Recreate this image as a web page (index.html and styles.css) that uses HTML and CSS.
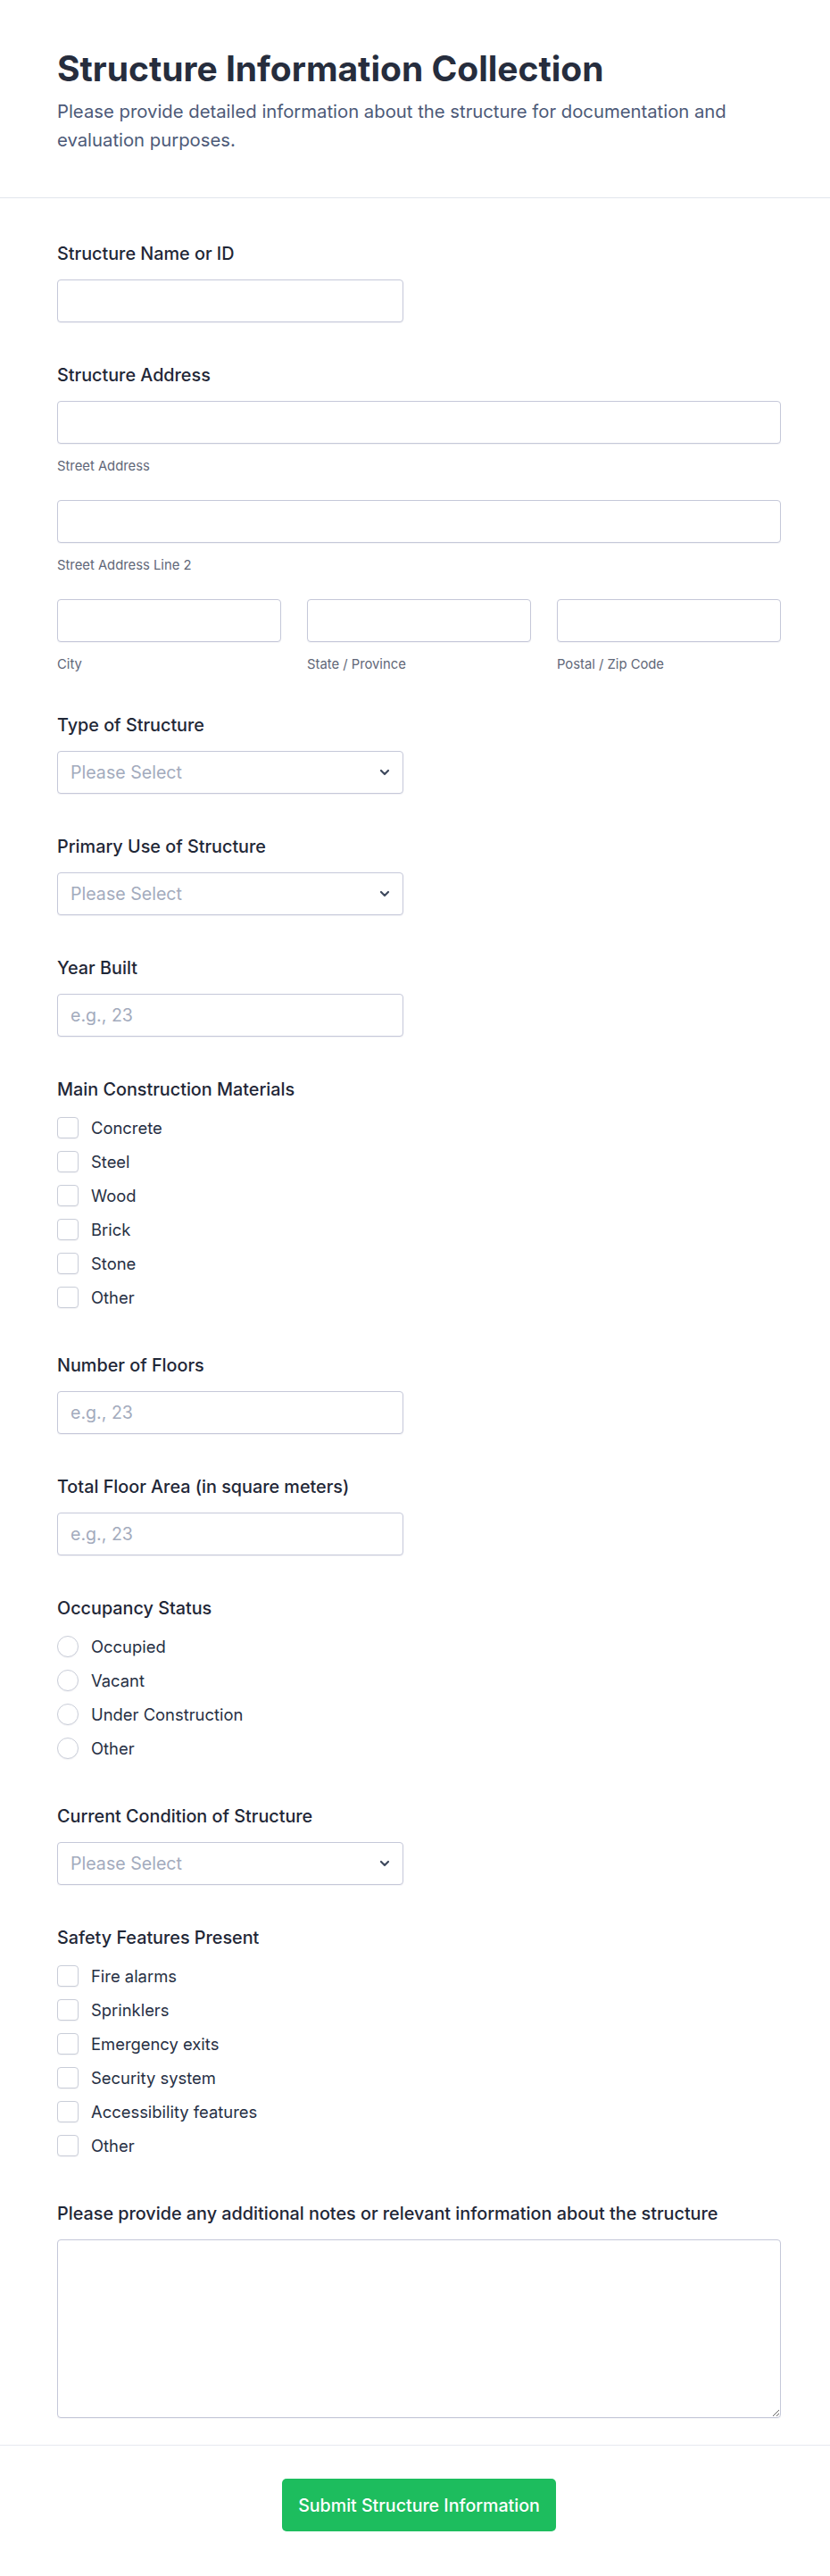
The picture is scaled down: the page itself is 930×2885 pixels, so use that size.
FILE: index.html
```html
<!DOCTYPE html>
<html lang="en">
<head>
<meta charset="utf-8">
<title>Structure Information Collection</title>
<link rel="stylesheet" href="styles.css">
</head>
<body>
<div class="page">
  <header class="header">
    <h1 class="title">Structure Information Collection</h1>
    <p class="subtitle">Please provide detailed information about the structure for documentation and evaluation purposes.</p>
  </header>

  <form class="form">
    <div class="field">
      <label class="label">Structure Name or ID</label>
      <input class="input input-half" type="text">
    </div>

    <div class="field field-address">
      <label class="label">Structure Address</label>
      <div class="addr-line">
        <input class="input" type="text">
        <span class="sublabel">Street Address</span>
      </div>
      <div class="addr-line">
        <input class="input" type="text">
        <span class="sublabel">Street Address Line 2</span>
      </div>
      <div class="addr-row">
        <div class="addr-cell">
          <input class="input" type="text">
          <span class="sublabel">City</span>
        </div>
        <div class="addr-cell">
          <input class="input" type="text">
          <span class="sublabel">State / Province</span>
        </div>
        <div class="addr-cell">
          <input class="input" type="text">
          <span class="sublabel">Postal / Zip Code</span>
        </div>
      </div>
    </div>

    <div class="field">
      <label class="label">Type of Structure</label>
      <div class="select input-half"><span class="placeholder">Please Select</span><svg class="chevron" viewBox="0 0 12 8" width="12" height="8"><path d="M2 2 L6 6 L10 2" fill="none" stroke="#3f4a5e" stroke-width="2.2" stroke-linecap="round" stroke-linejoin="round"/></svg></div>
    </div>

    <div class="field">
      <label class="label">Primary Use of Structure</label>
      <div class="select input-half"><span class="placeholder">Please Select</span><svg class="chevron" viewBox="0 0 12 8" width="12" height="8"><path d="M2 2 L6 6 L10 2" fill="none" stroke="#3f4a5e" stroke-width="2.2" stroke-linecap="round" stroke-linejoin="round"/></svg></div>
    </div>

    <div class="field">
      <label class="label">Year Built</label>
      <input class="input input-half" type="text" placeholder="e.g., 23">
    </div>

    <div class="field field-group">
      <label class="label">Main Construction Materials</label>
      <div class="options">
        <label class="option"><span class="box"></span>Concrete</label>
        <label class="option"><span class="box"></span>Steel</label>
        <label class="option"><span class="box"></span>Wood</label>
        <label class="option"><span class="box"></span>Brick</label>
        <label class="option"><span class="box"></span>Stone</label>
        <label class="option"><span class="box"></span>Other</label>
      </div>
    </div>

    <div class="field">
      <label class="label">Number of Floors</label>
      <input class="input input-half" type="text" placeholder="e.g., 23">
    </div>

    <div class="field">
      <label class="label">Total Floor Area (in square meters)</label>
      <input class="input input-half" type="text" placeholder="e.g., 23">
    </div>

    <div class="field field-group">
      <label class="label">Occupancy Status</label>
      <div class="options">
        <label class="option"><span class="box round"></span>Occupied</label>
        <label class="option"><span class="box round"></span>Vacant</label>
        <label class="option"><span class="box round"></span>Under Construction</label>
        <label class="option"><span class="box round"></span>Other</label>
      </div>
    </div>

    <div class="field">
      <label class="label">Current Condition of Structure</label>
      <div class="select input-half"><span class="placeholder">Please Select</span><svg class="chevron" viewBox="0 0 12 8" width="12" height="8"><path d="M2 2 L6 6 L10 2" fill="none" stroke="#3f4a5e" stroke-width="2.2" stroke-linecap="round" stroke-linejoin="round"/></svg></div>
    </div>

    <div class="field field-group">
      <label class="label">Safety Features Present</label>
      <div class="options">
        <label class="option"><span class="box"></span>Fire alarms</label>
        <label class="option"><span class="box"></span>Sprinklers</label>
        <label class="option"><span class="box"></span>Emergency exits</label>
        <label class="option"><span class="box"></span>Security system</label>
        <label class="option"><span class="box"></span>Accessibility features</label>
        <label class="option"><span class="box"></span>Other</label>
      </div>
    </div>

    <div class="field field-last">
      <label class="label">Please provide any additional notes or relevant information about the structure</label>
      <textarea class="textarea"></textarea>
    </div>
  </form>

  <footer class="footer">
    <button class="submit" type="button">Submit Structure Information</button>
  </footer>
</div>
</body>
</html>
```

FILE: styles.css
```css
* {
  box-sizing: border-box;
}

html, body {
  margin: 0;
  padding: 0;
  background: #ffffff;
}

body {
  font-family: Inter, "Noto Sans", "Liberation Sans", sans-serif;
  color: #1f2937;
}

.page {
  width: 930px;
  min-height: 2885px;
  background: #ffffff;
}

.header {
  padding: 53px 64px 48px;
  border-bottom: 1px solid #e2e5ec;
}

.title {
  margin: 0;
  font-size: 39px;
  line-height: 48px;
  font-weight: 700;
  color: #262d3d;
}

.subtitle {
  margin: 8px 0 0;
  font-size: 20.3px;
  line-height: 32px;
  color: #4d5a78;
}

.form {
  padding: 50px 55px 30px 64px;
  display: flex;
  flex-direction: column;
}

.field {
  display: flex;
  flex-direction: column;
  align-items: flex-start;
  margin-bottom: 47px;
}

.field-address {
  margin-bottom: 46px;
  align-items: stretch;
}

.field-group {
  margin-bottom: 51px;
}

.field-last {
  margin-bottom: 0;
  align-items: stretch;
}

.label {
  display: block;
  font-size: 19.8px;
  line-height: 24px;
  font-weight: 500;
  color: #1f2737;
  margin-bottom: 17px;
}

.input {
  display: block;
  width: 100%;
  height: 48px;
  border: 1px solid #c5c8d9;
  border-radius: 4px;
  background: #ffffff;
  padding: 0 14px;
  font-family: inherit;
  font-size: 19.6px;
  color: #1f2937;
  box-shadow: 0 1px 1px rgba(30, 40, 80, 0.06);
  outline: none;
}

.input::placeholder {
  color: #a3abbd;
}

.input-half {
  width: 388px;
}

.addr-line {
  display: flex;
  flex-direction: column;
  margin-bottom: 28px;
}

.sublabel {
  display: block;
  margin-top: 15px;
  font-size: 14.8px;
  line-height: 20px;
  color: #5f6778;
}

.addr-row {
  display: grid;
  grid-template-columns: 1fr 1fr 1fr;
  column-gap: 29px;
}

.addr-cell {
  display: flex;
  flex-direction: column;
}

.select {
  height: 48px;
  border: 1px solid #c5c8d9;
  border-radius: 4px;
  background: #ffffff;
  padding: 0 14px;
  display: flex;
  align-items: center;
  justify-content: space-between;
  box-shadow: 0 1px 1px rgba(30, 40, 80, 0.06);
}

.placeholder {
  font-size: 19.6px;
  color: #a3abbd;
}

.options {
  display: flex;
  flex-direction: column;
  gap: 12px;
  padding-top: 1px;
}

.option {
  display: flex;
  align-items: center;
  gap: 14px;
  height: 26px;
  font-size: 18.4px;
  color: #273044;
}

.box {
  flex: none;
  width: 24px;
  height: 24px;
  border: 1px solid #c9cdd8;
  border-radius: 4px;
  background: #ffffff;
  box-shadow: 0 1px 1px rgba(30, 40, 80, 0.05);
}

.box.round {
  border-radius: 50%;
}

.textarea {
  display: block;
  width: 100%;
  height: 200px;
  border: 1px solid #c5c8d9;
  border-radius: 4px;
  background: #ffffff;
  box-shadow: 0 1px 1px rgba(30, 40, 80, 0.06);
  resize: vertical;
  font-family: inherit;
  font-size: 18px;
  padding: 10px 14px;
  outline: none;
}

.footer {
  border-top: 1px solid #e6e9ef;
  padding: 37px 55px 50px 64px;
  display: flex;
  justify-content: center;
}

.submit {
  width: 307px;
  height: 59px;
  border: none;
  border-radius: 5px;
  background: #1dbd5e;
  color: #ffffff;
  font-family: inherit;
  font-size: 19.6px;
  font-weight: 500;
  cursor: pointer;
}
```
